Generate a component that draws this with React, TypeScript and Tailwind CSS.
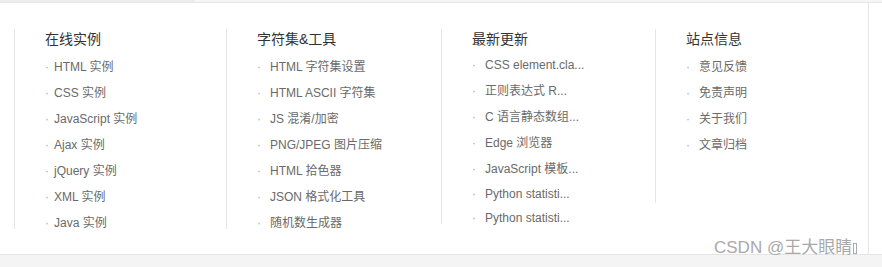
import React from "react";

type Col = {
  title: string;
  items: string[];
  width: string;
  height: string;
  textPad: string;
  tight?: boolean;
};

const cols: Col[] = [
  {
    title: "在线实例",
    items: ["HTML 实例", "CSS 实例", "JavaScript 实例", "Ajax 实例", "jQuery 实例", "XML 实例", "Java 实例"],
    width: "w-[212px]",
    height: "h-[200px]",
    textPad: "gap-[3px]",
  },
  {
    title: "字符集&工具",
    items: ["HTML 字符集设置", "HTML ASCII 字符集", "JS 混淆/加密", "PNG/JPEG 图片压缩", "HTML 拾色器", "JSON 格式化工具", "随机数生成器"],
    width: "w-[215px]",
    height: "h-[200px]",
    textPad: "gap-[7px]",
  },
  {
    title: "最新更新",
    items: ["CSS element.cla...", "正则表达式 R...", "C 语言静态数组...", "Edge 浏览器", "JavaScript 模板...", "Python statisti...", "Python statisti..."],
    width: "w-[214px]",
    height: "h-[195px]",
    textPad: "gap-[7px]",
    tight: true,
  },
  {
    title: "站点信息",
    items: ["意见反馈", "免责声明", "关于我们", "文章归档"],
    width: "w-[213px]",
    height: "h-[174px]",
    textPad: "gap-[7px]",
  },
];

const FooterColumn: React.FC<Col> = ({ title, items, width, height, textPad, tight }) => {
  return (
    <div className={`${width} ${height} border-l border-[#e4e4e4] pl-[30px] shrink-0`}>
      <h4 className="text-[14px] leading-[20px] text-[#333] mb-[5px]">{title}</h4>
      <ul className={tight ? "-mt-[2px]" : ""}>
        {items.map((item, i) => (
          <li
            key={i}
            className={`flex items-center ${textPad} text-[12px] whitespace-nowrap ${
              tight && i >= 5 ? "h-[24px]" : "h-[26px]"
            }`}
          >
            <span className="text-[#aaa] w-[6px] text-[12px]">·</span>
            <span className="text-[#6a6a6a]">{item}</span>
          </li>
        ))}
      </ul>
    </div>
  );
};

export default function App() {
  return (
    <div className="relative w-[882px] h-[267px] bg-white overflow-hidden font-['Liberation_Sans','Noto_Sans_CJK_SC',sans-serif]">
      <div className="flex h-[3px] border-b border-[#e6e6e6]">
        <div className="w-[195px] bg-[#ececec]" />
        <div className="flex-1 bg-[#f5f5f5]" />
      </div>
      <div className="flex h-[251px]">
        <div className="w-[869px] border-r border-[#e6e6e6] pt-[26px] pl-[14px] flex">
          {cols.map((c) => (
            <FooterColumn key={c.title} {...c} />
          ))}
        </div>
      </div>
      <div className="h-[13px] bg-[#f4f4f4] border-t border-[#e4e4e4]" />

      <div className="absolute left-[714px] top-[238px] flex items-center text-[17px] leading-[20px] text-[#a9a9a9] [text-shadow:0_0_1px_#fff]">
        <span>CSDN @王大眼睛</span>
        <span className="ml-[1px] inline-block w-[4px] h-[11px] border border-[#aaa]" />
      </div>
    </div>
  );
}
